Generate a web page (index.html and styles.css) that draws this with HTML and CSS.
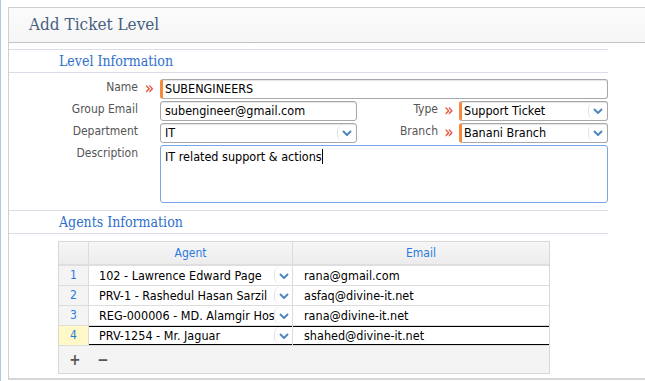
FILE: index.html
```html
<!DOCTYPE html>
<html lang="en">
<head>
	<meta charset="UTF-8">
	<title>Add Ticket Level</title>
	<link rel="stylesheet" href="styles.css">
</head>
<body>
	<div class="page">
		<div class="page-head">Add Ticket Level</div>
		<div class="page-body">
			<div class="sec-title">Level Information</div>
			<div class="form">
				<label class="lbl">Name</label>
				<span class="req">&raquo;</span>
				<div class="fld wide"><div class="inp must">SUBENGINEERS</div></div>

				<label class="lbl">Group Email</label>
				<span class="req"></span>
				<div class="fld"><div class="inp">subengineer@gmail.com</div></div>
				<label class="lbl">Type</label>
				<span class="req">&raquo;</span>
				<div class="fld"><div class="inp sel must">Support Ticket<span class="arr"><svg width="10" height="6" viewBox="0 0 10 6"><path d="M1 1 L5 5 L9 1" fill="none" stroke="#4f87bd" stroke-width="2"/></svg></span></div></div>

				<label class="lbl">Department</label>
				<span class="req"></span>
				<div class="fld"><div class="inp sel">IT<span class="arr"><svg width="10" height="6" viewBox="0 0 10 6"><path d="M1 1 L5 5 L9 1" fill="none" stroke="#4f87bd" stroke-width="2"/></svg></span></div></div>
				<label class="lbl">Branch</label>
				<span class="req">&raquo;</span>
				<div class="fld"><div class="inp sel must">Banani Branch<span class="arr"><svg width="10" height="6" viewBox="0 0 10 6"><path d="M1 1 L5 5 L9 1" fill="none" stroke="#4f87bd" stroke-width="2"/></svg></span></div></div>

				<label class="lbl">Description</label>
				<span class="req"></span>
				<div class="fld wide"><div class="txt">IT related support &amp; actions<span class="caret"></span></div></div>
			</div>

			<div class="sec-title sec2">Agents Information</div>
			<div class="grid-wrap">
				<table class="grid">
					<thead>
						<tr><th class="num"></th><th class="c-agent">Agent</th><th class="c-mail">Email</th></tr>
					</thead>
					<tbody>
						<tr><td class="num">1</td><td class="agent">102 - Lawrence Edward Page<span class="arr"><svg width="10" height="6" viewBox="0 0 10 6"><path d="M1 1 L5 5 L9 1" fill="none" stroke="#4f87bd" stroke-width="2"/></svg></span></td><td class="mail">rana@gmail.com</td></tr>
						<tr><td class="num">2</td><td class="agent">PRV-1 - Rashedul Hasan Sarzil<span class="arr"><svg width="10" height="6" viewBox="0 0 10 6"><path d="M1 1 L5 5 L9 1" fill="none" stroke="#4f87bd" stroke-width="2"/></svg></span></td><td class="mail">asfaq@divine-it.net</td></tr>
						<tr><td class="num">3</td><td class="agent">REG-000006 - MD. Alamgir Hossain<span class="arr"><svg width="10" height="6" viewBox="0 0 10 6"><path d="M1 1 L5 5 L9 1" fill="none" stroke="#4f87bd" stroke-width="2"/></svg></span></td><td class="mail">rana@divine-it.net</td></tr>
						<tr class="on"><td class="num">4</td><td class="agent">PRV-1254 - Mr. Jaguar<span class="arr"><svg width="10" height="6" viewBox="0 0 10 6"><path d="M1 1 L5 5 L9 1" fill="none" stroke="#4f87bd" stroke-width="2"/></svg></span></td><td class="mail">shahed@divine-it.net</td></tr>
					</tbody>
				</table>
				<div class="grid-foot"><span class="btn">+</span><span class="btn">&minus;</span></div>
			</div>
		</div>
	</div>
</body>
</html>
```

FILE: styles.css
```css
html,body{margin:0;padding:0;}
body{
	background:#fff;
	font-family:"DejaVu Sans Condensed","DejaVu Sans",sans-serif;
	font-size:12px;
	color:#000;
	border-left:1px solid #b5c7e0;
	height:381px;
	box-sizing:border-box;
	overflow:hidden;
}
.page{
	margin:7px 0 0 7px;
	border-top:1px solid #cfcfcf;
	border-left:1px solid #cfcfcf;
	border-bottom:2px solid #d6d6d6;
}
.page-head{
	height:34px;
	line-height:32px;
	padding-left:20px;
	background:linear-gradient(#fbfbfb,#f6f6f6);
	border-bottom:1px solid #c4c4c4;
	font-family:"DejaVu Serif Condensed","DejaVu Serif",serif;
	font-size:17px;
	color:#46617f;
}
.page-body{width:599px;padding:6px 0 4px;}
.sec-title{
	height:22px;
	line-height:23px;
	padding-left:50px;
	border-top:1px solid #dcdce8;
	border-bottom:1px solid #dcdce8;
	font-family:"DejaVu Serif Condensed","DejaVu Serif",serif;
	font-size:14px;
	color:#2e6fcc;
}
.sec2{margin-top:7px;}
.form{
	display:grid;
	grid-template-columns:129px 22px 197px 81px 21px 149px;
	grid-template-rows:20px 20px 20px 58px;
	row-gap:2px;
	padding-top:6px;
}
.lbl{
	text-align:right;
	color:#555;
	line-height:17px;
}
.req{
	color:#e8462c;
	font-size:17px;
	line-height:19px;
	text-align:center;
	padding-left:1px;
}
.fld.wide{grid-column:3 / 7;}
.inp{
	position:relative;
	height:20px;
	box-sizing:border-box;
	border:1px solid #a8a8a8;
	border-radius:3px;
	line-height:18px;
	padding-left:4px;
	font-size:12.5px;
	box-shadow:inset 0 1px 1px #e4e4e4;
	white-space:nowrap;
	overflow:hidden;
}
.inp.must{border-left:3px solid #f58a3c;padding-left:2px;}
.inp .arr{
	position:absolute;
	top:1px;right:0;bottom:1px;
	width:18px;
	border-left:1px solid #e2e2e2;
	border-radius:6px 0 0 6px;
	display:flex;
	align-items:center;
	justify-content:center;
}
.txt{
	height:58px;
	box-sizing:border-box;
	border:1px solid #79a6e6;
	border-radius:3px;
	padding:2px 4px;
	line-height:17px;
	font-size:12.5px;
}
.caret{display:inline-block;width:1px;height:15px;background:#000;vertical-align:-3px;}
.grid-wrap{
	margin:7px 0 0 49px;
	width:490px;
	border:1px solid #d8d8d8;
	background:#f4f4f4;
}
.grid{border-collapse:collapse;width:100%;table-layout:fixed;}
.grid th{
	height:22px;
	background:linear-gradient(#f6f6f6,#ececec);
	border-right:1px solid #dcdcdc;
	border-bottom:2px solid #dedede;
	color:#2a7ae0;
	font-weight:normal;
	padding:0;
}
.grid th.num{width:29px;}
.grid th.c-agent{width:203px;}
.grid th:last-child{border-right:0;}
.grid td{
	height:19px;
	padding:0 0 0 4px;
	background:#fff;
	border-right:1px solid #dcdcdc;
	border-bottom:1px solid #dcdcdc;
	white-space:nowrap;
	overflow:hidden;
	line-height:19px;
	font-size:12.5px;
}
.grid td:last-child{border-right:0;}
.grid td.num{
	background:#f4f4f4;
	color:#2a7ae0;
	text-align:center;
	padding:0;
	font-size:12px;
}
.grid td.agent{position:relative;padding-left:10px;}
.grid td.mail{padding-left:11px;}
.grid td.agent .arr{
	position:absolute;
	top:1px;right:0;bottom:1px;
	width:17px;
	background:#fff;
	border-left:1px solid #e2e2e2;
	border-radius:6px 0 0 6px;
	display:flex;
	align-items:center;
	justify-content:center;
}
.grid tr.on td{box-shadow:inset 0 1px 0 #000,inset 0 -1px 0 #000;}
.grid tr.on td.num{background:#fff9c8;box-shadow:none;}
.grid-foot{height:27px;display:flex;align-items:center;padding-left:9px;gap:14px;}
.grid-foot .btn{color:#555;font-size:15px;font-weight:bold;width:14px;text-align:center;}
```
